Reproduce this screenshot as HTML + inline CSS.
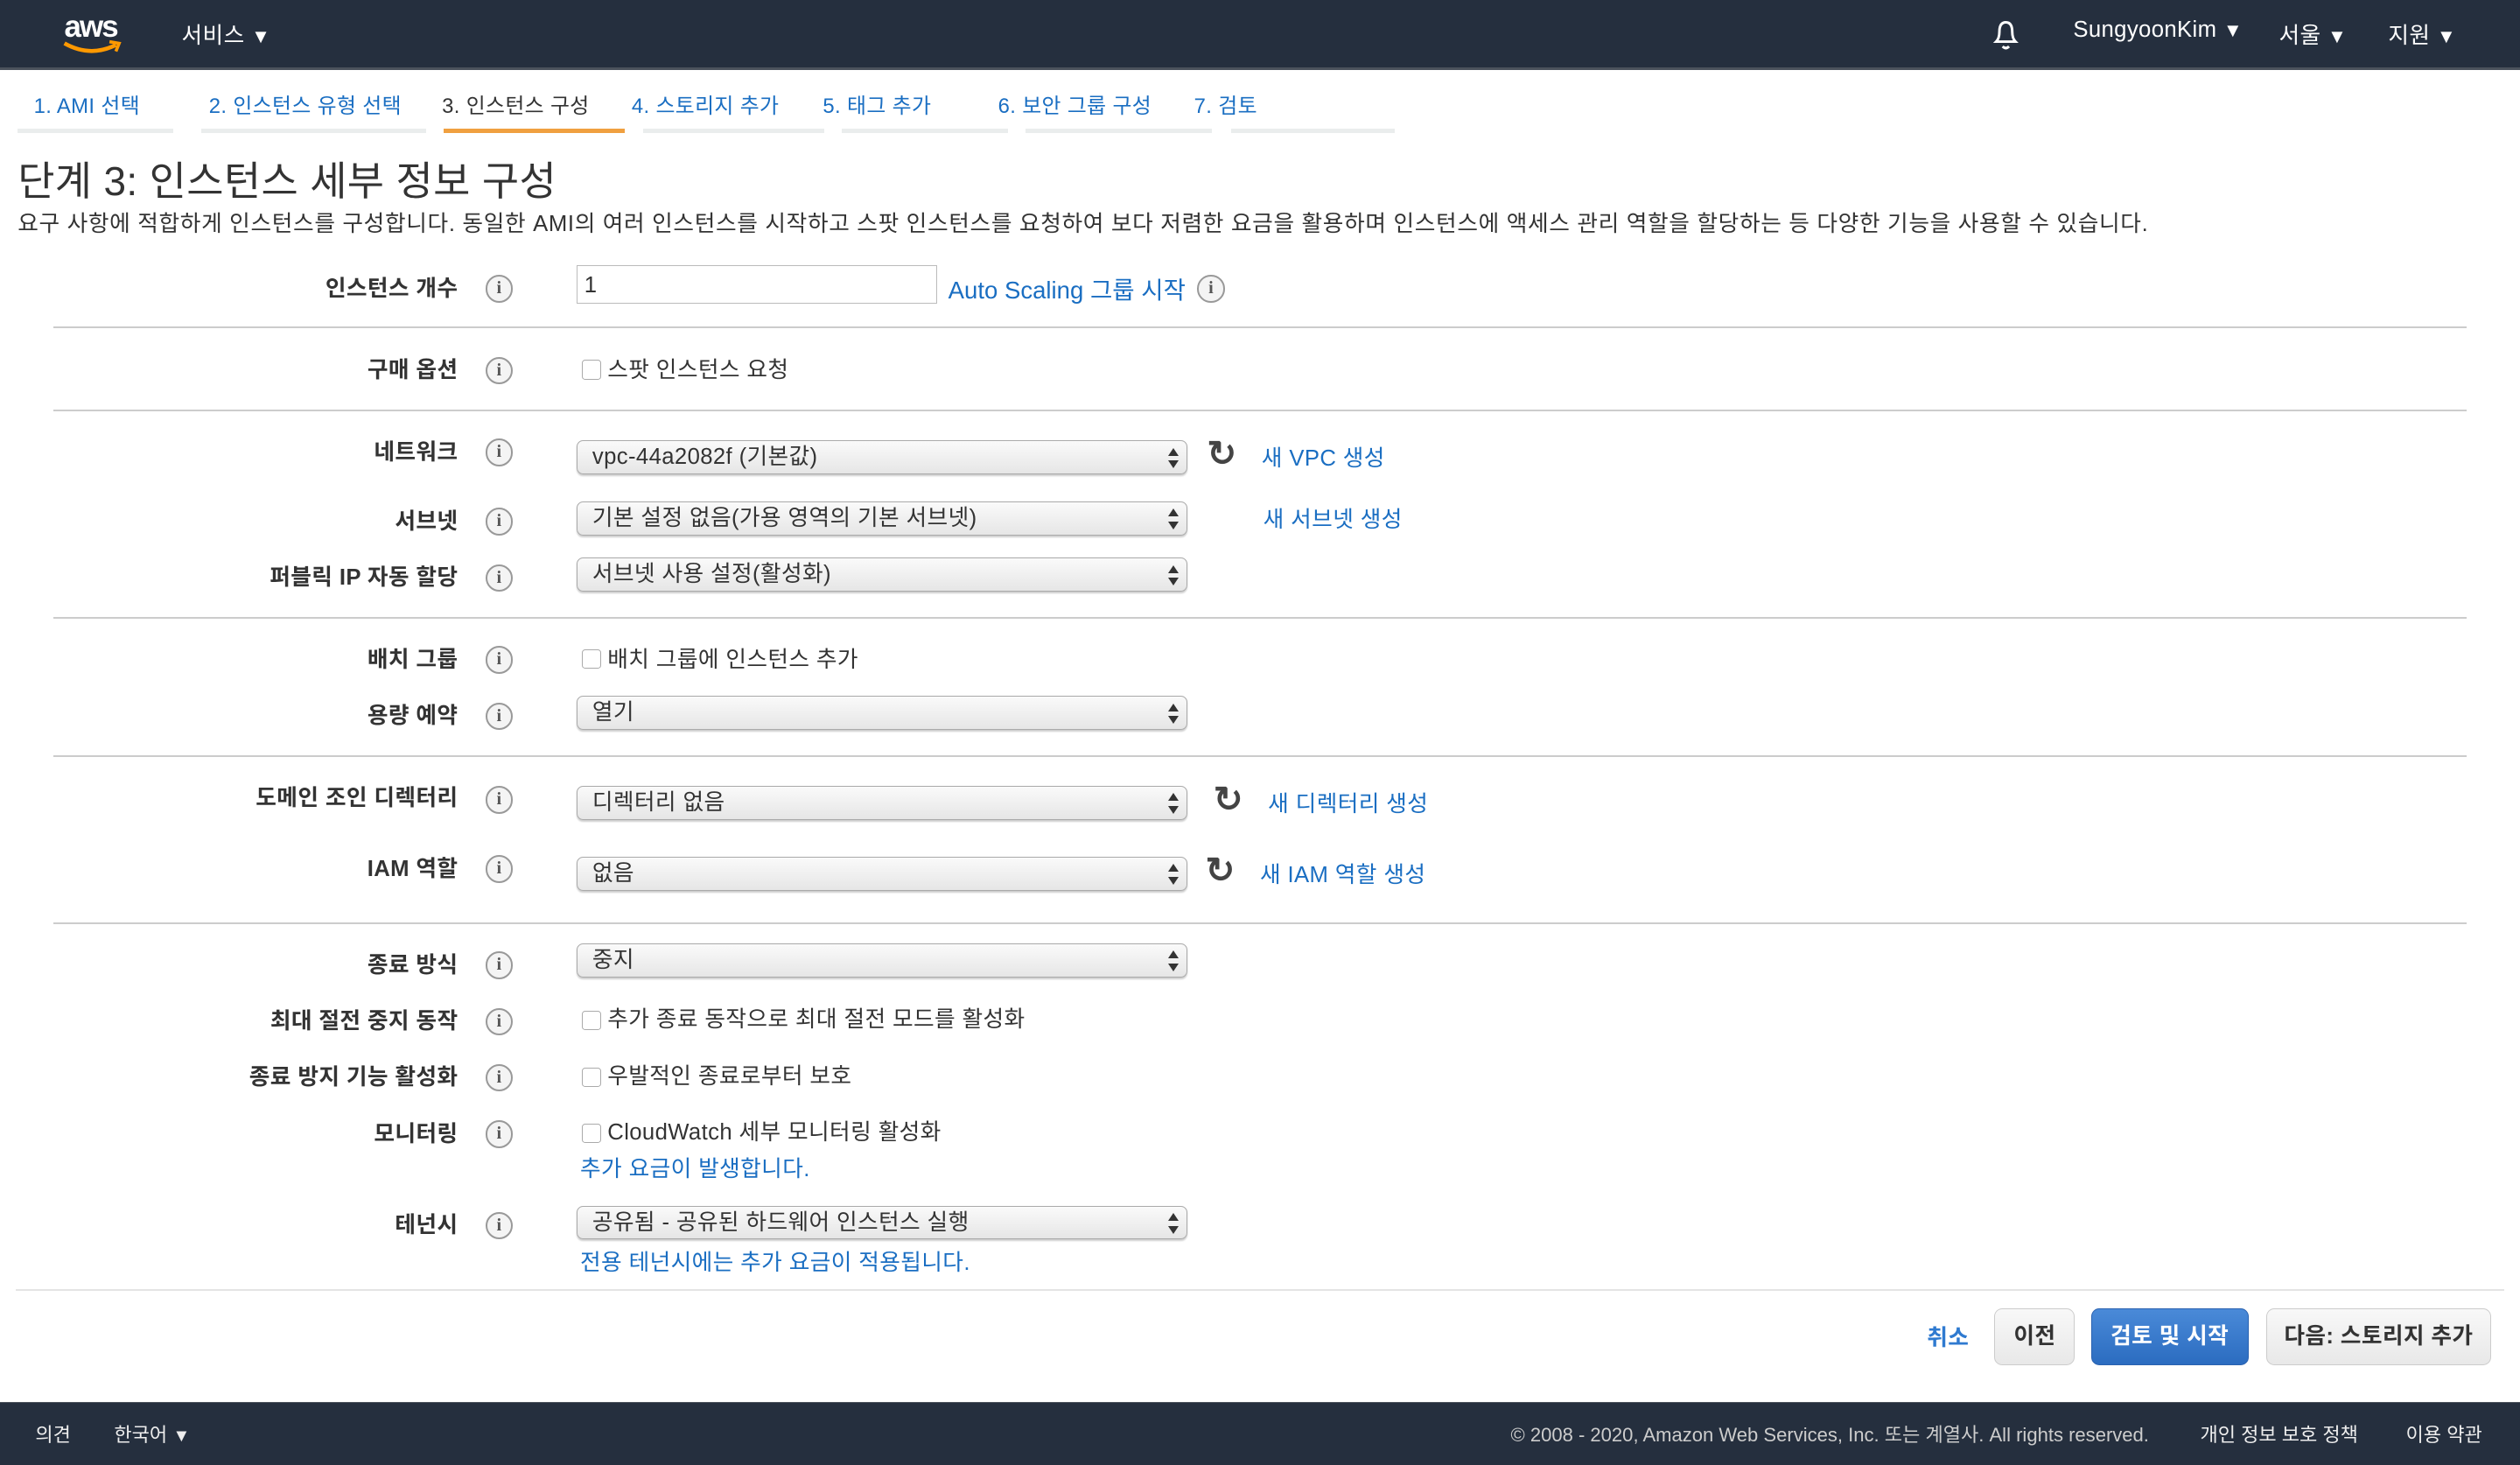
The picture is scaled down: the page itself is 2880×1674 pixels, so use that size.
<!DOCTYPE html>
<html><head><meta charset="utf-8"><style>
html,body{margin:0;padding:0;background:#fff;overflow:hidden}
body{width:2880px;height:1674px}
#w{zoom:1.8367;position:relative;width:1568px;height:911.5px;font-family:"Liberation Sans","Noto Sans CJK KR",sans-serif;color:#333;font-size:14px;letter-spacing:0.2px}
.a{position:absolute;white-space:nowrap}
.hdr{left:0;top:0;width:1568px;height:42px;background:#252f3e;border-bottom:2px solid #4b525c}
.ht{color:#fff;font-size:14px;top:11px}
.tab{top:55px;font-size:13px;color:#1a6ec2}
.bar{top:80px;height:3px;background:#eaeded}
.lab{right:1283px;font-weight:bold;font-size:14px;color:#333;text-align:right}
.info{left:302px;width:15px;height:15px;border:1.5px solid #999;border-radius:50%;background:#f4f4f4;color:#555;font-size:11px;line-height:15px;text-align:center;font-family:"Liberation Serif",serif;font-weight:bold}
.sep{left:33px;width:1502px;height:1px;background:#ccc}
.sel{left:359px;height:20px;border:1px solid #aaa;border-radius:4px;background:linear-gradient(#fafafa,#e6e6e6);font-size:14px;line-height:20px;padding-left:9px;box-sizing:content-box;width:370px;box-shadow:0 1px 1px rgba(0,0,0,.2)}
.sel:after{content:"";position:absolute;right:5px;top:4px;border-left:3.5px solid transparent;border-right:3.5px solid transparent;border-bottom:5px solid #333}
.sel:before{content:"";position:absolute;right:5px;top:12px;border-left:3.5px solid transparent;border-right:3.5px solid transparent;border-top:5px solid #333}
.cb{left:362px;width:11px;height:11px;border:1px solid #aaa;border-radius:2px;background:#fff}
.ct{left:378px;font-size:14px}
.lnk{color:#1a6ec2;font-size:14px}
.ref{font-size:22px;color:#444;font-weight:bold}
.btn{top:814px;height:34px;border:1px solid #ccc;border-radius:5px;background:linear-gradient(#f8f8f8,#e8e8e8);font-weight:bold;font-size:14px;line-height:34px;text-align:center}
.ft{color:#eee;font-size:12px;top:883px;letter-spacing:0}
</style></head><body><div id="w">
<div class="a hdr"></div>
<div class="a" style="left:40px;top:6px;color:#fff;font-size:19px;font-weight:bold;letter-spacing:-1px">aws</div>
<svg class="a" style="left:38px;top:24px" width="40" height="12"><path d="M2 3 Q18 12 34 4" stroke="#f90" stroke-width="2.5" fill="none"/><path d="M30 2 L36 3 L34 8" stroke="#f90" stroke-width="2" fill="none"/></svg>
<div class="a ht" style="left:113px">서비스 <span style="font-size:12px">▼</span></div>
<svg class="a" style="left:1238px;top:11px" width="20" height="22"><path d="M4 15 Q6 13 6 9 Q6 3 10 3 Q14 3 14 9 Q14 13 16 15 Z" stroke="#fff" stroke-width="1.6" fill="none"/><path d="M8 18 Q10 20 12 18" stroke="#fff" stroke-width="1.6" fill="none"/></svg>
<div class="a ht" style="left:1290px">SungyoonKim <span style="font-size:12px">▼</span></div>
<div class="a ht" style="left:1418px">서울 <span style="font-size:12px">▼</span></div>
<div class="a ht" style="left:1486px">지원 <span style="font-size:12px">▼</span></div>

<div class="a tab" style="left:21px">1. AMI 선택</div><div class="a bar" style="left:11px;width:97px"></div>
<div class="a tab" style="left:130px">2. 인스턴스 유형 선택</div><div class="a bar" style="left:125px;width:140px"></div>
<div class="a tab" style="left:275px;color:#333">3. 인스턴스 구성</div><div class="a bar" style="left:276px;width:113px;background:#f0a040"></div>
<div class="a tab" style="left:393px">4. 스토리지 추가</div><div class="a bar" style="left:400px;width:113px"></div>
<div class="a tab" style="left:512px">5. 태그 추가</div><div class="a bar" style="left:524px;width:103px"></div>
<div class="a tab" style="left:621px">6. 보안 그룹 구성</div><div class="a bar" style="left:638px;width:116px"></div>
<div class="a tab" style="left:743px">7. 검토</div><div class="a bar" style="left:766px;width:102px"></div>

<div class="a" style="left:11px;top:93px;font-size:25px;color:#333">단계 3: 인스턴스 세부 정보 구성</div>
<div class="a" style="left:11px;top:128px;font-size:14px;letter-spacing:0.35px">요구 사항에 적합하게 인스턴스를 구성합니다. 동일한 AMI의 여러 인스턴스를 시작하고 스팟 인스턴스를 요청하여 보다 저렴한 요금을 활용하며 인스턴스에 액세스 관리 역할을 할당하는 등 다양한 기능을 사용할 수 있습니다.</div>

<div class="a lab" style="top:168px">인스턴스 개수</div><div class="a info" style="top:171px">i</div>
<div class="a" style="left:359px;top:165px;height:24px;border:1px solid #bbb;line-height:24px;padding-left:4px;box-sizing:border-box;width:224px">1</div>
<div class="a lnk" style="left:590px;top:168px;font-size:15px;letter-spacing:0">Auto Scaling 그룹 시작</div><div class="a info" style="left:745px;top:171px">i</div>
<div class="a sep" style="top:203px"></div>

<div class="a lab" style="top:219px">구매 옵션</div><div class="a info" style="top:222px">i</div>
<div class="a cb" style="top:224px"></div><div class="a ct" style="top:219px">스팟 인스턴스 요청</div>
<div class="a sep" style="top:255px"></div>

<div class="a lab" style="top:270px">네트워크</div><div class="a info" style="top:273px">i</div>
<div class="a sel" style="top:274px">vpc-44a2082f (기본값)</div>
<div class="a ref" style="left:751px;top:269px">↻</div><div class="a lnk" style="left:785px;top:274px">새 VPC 생성</div>
<div class="a lab" style="top:313px">서브넷</div><div class="a info" style="top:316px">i</div>
<div class="a sel" style="top:312px">기본 설정 없음(가용 영역의 기본 서브넷)</div>
<div class="a lnk" style="left:786px;top:312px">새 서브넷 생성</div>
<div class="a lab" style="top:348px">퍼블릭 IP 자동 할당</div><div class="a info" style="top:351px">i</div>
<div class="a sel" style="top:347px">서브넷 사용 설정(활성화)</div>
<div class="a sep" style="top:384px"></div>

<div class="a lab" style="top:399px">배치 그룹</div><div class="a info" style="top:402px">i</div>
<div class="a cb" style="top:404px"></div><div class="a ct" style="top:399px">배치 그룹에 인스턴스 추가</div>
<div class="a lab" style="top:434px">용량 예약</div><div class="a info" style="top:437px">i</div>
<div class="a sel" style="top:433px">열기</div>
<div class="a sep" style="top:470px"></div>

<div class="a lab" style="top:485px">도메인 조인 디렉터리</div><div class="a info" style="top:489px">i</div>
<div class="a sel" style="top:489px">디렉터리 없음</div>
<div class="a ref" style="left:755px;top:484px">↻</div><div class="a lnk" style="left:789px;top:489px">새 디렉터리 생성</div>
<div class="a lab" style="top:529px">IAM 역할</div><div class="a info" style="top:532px">i</div>
<div class="a sel" style="top:533px">없음</div>
<div class="a ref" style="left:750px;top:528px">↻</div><div class="a lnk" style="left:784px;top:533px">새 IAM 역할 생성</div>
<div class="a sep" style="top:574px"></div>

<div class="a lab" style="top:589px">종료 방식</div><div class="a info" style="top:592px">i</div>
<div class="a sel" style="top:587px">중지</div>
<div class="a lab" style="top:624px">최대 절전 중지 동작</div><div class="a info" style="top:627px">i</div>
<div class="a cb" style="top:629px"></div><div class="a ct" style="top:623px">추가 종료 동작으로 최대 절전 모드를 활성화</div>
<div class="a lab" style="top:659px">종료 방지 기능 활성화</div><div class="a info" style="top:662px">i</div>
<div class="a cb" style="top:664px"></div><div class="a ct" style="top:658px">우발적인 종료로부터 보호</div>
<div class="a lab" style="top:694px">모니터링</div><div class="a info" style="top:697px">i</div>
<div class="a cb" style="top:699px"></div><div class="a ct" style="top:693px">CloudWatch 세부 모니터링 활성화</div>
<div class="a lnk" style="left:361px;top:716px">추가 요금이 발생합니다.</div>
<div class="a lab" style="top:751px">테넌시</div><div class="a info" style="top:754px">i</div>
<div class="a sel" style="top:750px">공유됨 - 공유된 하드웨어 인스턴스 실행</div>
<div class="a lnk" style="left:361px;top:774px">전용 테넌시에는 추가 요금이 적용됩니다.</div>
<div class="a" style="left:10px;top:802px;width:1548px;height:1px;background:#e4e4e4"></div>

<div class="a lnk" style="left:1199px;top:821px;font-weight:bold;color:#2f7ad0">취소</div>
<div class="a btn" style="left:1241px;width:49px">이전</div>
<div class="a btn" style="left:1301px;width:97px;background:linear-gradient(#4a8ad8,#2b6cc0);border-color:#2a62b0;color:#fff">검토 및 시작</div>
<div class="a btn" style="left:1410px;width:139px">다음: 스토리지 추가</div>

<div class="a" style="left:0;top:872px;width:1568px;height:40px;background:#252f3e;border-top:1px solid #4b525c"></div>
<div class="a ft" style="left:22px">의견</div>
<div class="a ft" style="left:71px">한국어 <span style="font-size:11px">▼</span></div>
<div class="a ft" style="left:940px;color:#ccc">© 2008 - 2020, Amazon Web Services, Inc. 또는 계열사. All rights reserved.</div>
<div class="a ft" style="left:1369px">개인 정보 보호 정책</div>
<div class="a ft" style="left:1497px">이용 약관</div>
</div></body></html>
